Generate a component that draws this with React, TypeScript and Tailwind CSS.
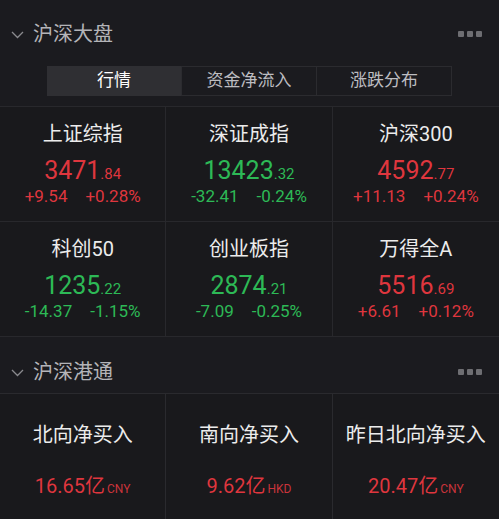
const idx = [
  { name: '上证综指', int: '3471', dec: '84', chg: '+9.54', pct: '+0.28%', up: true },
  { name: '深证成指', int: '13423', dec: '32', chg: '-32.41', pct: '-0.24%', up: false },
  { name: '沪深300', int: '4592', dec: '77', chg: '+11.13', pct: '+0.24%', up: true },
  { name: '科创50', int: '1235', dec: '22', chg: '-14.37', pct: '-1.15%', up: false },
  { name: '创业板指', int: '2874', dec: '21', chg: '-7.09', pct: '-0.25%', up: false },
  { name: '万得全A', int: '5516', dec: '69', chg: '+6.61', pct: '+0.12%', up: true },
];

const flows = [
  { name: '北向净买入', val: '16.65亿', unit: 'CNY' },
  { name: '南向净买入', val: '9.62亿', unit: 'HKD' },
  { name: '昨日北向净买入', val: '20.47亿', unit: 'CNY' },
];

function Chevron() {
  return (
    <svg width="13" height="8" viewBox="0 0 13 8" className="mt-[2px]">
      <path d="M1 1 L6.5 6.5 L12 1" fill="none" stroke="#8a8a8e" strokeWidth="1.3" />
    </svg>
  );
}

function Dots() {
  return (
    <div className="flex gap-[3px]">
      <span className="w-[6px] h-[6px] bg-[#6e6e72] rounded-[1px]" />
      <span className="w-[6px] h-[6px] bg-[#6e6e72] rounded-[1px]" />
      <span className="w-[6px] h-[6px] bg-[#6e6e72] rounded-[1px]" />
    </div>
  );
}

function SectionHead({ title }: { title: string }) {
  return (
    <div className="flex items-center justify-between pl-[11px] pr-[17px]">
      <div className="flex items-center gap-[9px]">
        <Chevron />
        <span className="text-[20px] leading-none text-[#b4b4b8]">{title}</span>
      </div>
      <Dots />
    </div>
  );
}

export default function App() {
  const cjk = { fontFamily: 'Roboto, "Noto Sans CJK SC", sans-serif' };
  return (
    <div className="w-[499px] h-[519px] overflow-hidden bg-[#1b1b1f] text-[#ececec]" style={cjk}>
      {/* 沪深大盘 */}
      <div className="pt-[24px]">
        <SectionHead title="沪深大盘" />
      </div>

      <div className="mt-[22px] ml-[47px] w-[405px] h-[30px] flex text-[17px]">
        <div className="flex-1 flex items-center justify-center bg-[#2f2f33] text-white">行情</div>
        <div className="flex-1 flex items-center justify-center border border-[#2b2b2f] text-[#bdbdc1]">资金净流入</div>
        <div className="flex-1 flex items-center justify-center border border-l-0 border-[#2b2b2f] text-[#bdbdc1]">涨跌分布</div>
      </div>

      <div className="mt-[10px] grid grid-cols-3 border-t border-[#28282c]">
        {idx.map((d, i) => {
          const c = d.up ? 'text-[#df363e]' : 'text-[#2db956]';
          return (
            <div
              key={i}
              className={`h-[115px] flex flex-col items-center pt-[14px] bg-[#19191c] border-b border-[#28282c] ${i % 3 !== 2 ? 'border-r' : ''}`}
            >
              <div className="text-[20px] leading-[26px] text-[#ececec]">{d.name}</div>
              <div className={`mt-[9px] leading-[30px] ${c}`}>
                <span className="text-[25px]">{d.int}</span>
                <span className="text-[15px]">.{d.dec}</span>
              </div>
              <div className={`mt-[-5px] flex gap-[18px] text-[17px] leading-[24px] ${c}`}>
                <span>{d.chg}</span>
                <span>{d.pct}</span>
              </div>
            </div>
          );
        })}
      </div>

      {/* 沪深港通 */}
      <div className="pt-[25px] pb-[11px]">
        <SectionHead title="沪深港通" />
      </div>

      <div className="grid grid-cols-3 border-t border-[#2a2a2e]">
        {flows.map((d, i) => (
          <div
            key={i}
            className={`h-[130px] flex flex-col items-center pt-[28px] bg-[#19191c] ${i !== 2 ? 'border-r border-[#2a2a2e]' : ''}`}
          >
            <div className="text-[20px] leading-[26px] text-[#ececec]">{d.name}</div>
            <div className="mt-[23px] flex items-baseline text-[#df363e]">
              <span className="text-[20px]">{d.val}</span>
              <span className="ml-[2px] text-[12px] text-[#c9343b]">{d.unit}</span>
            </div>
          </div>
        ))}
      </div>
    </div>
  );
}
